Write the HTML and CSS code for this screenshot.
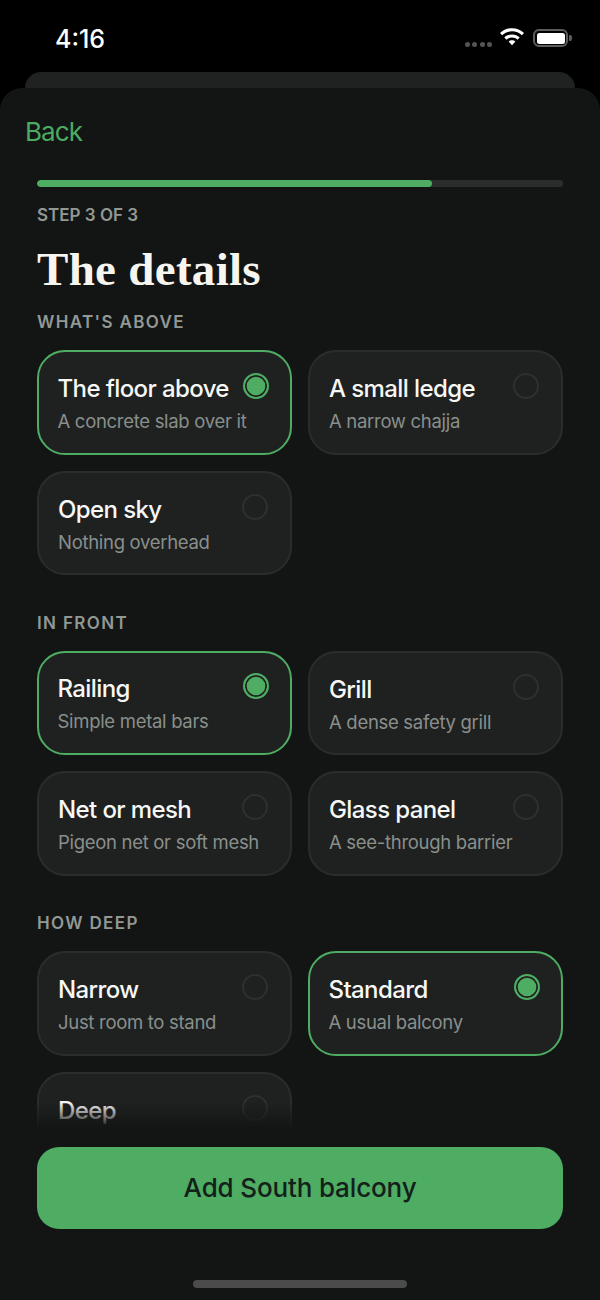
FILE: index.html
```html
<!DOCTYPE html>
<html lang="en">
<head>
<meta charset="utf-8">
<title>The details</title>
<link rel="stylesheet" href="styles.css">
</head>
<body>
<div class="phone">
  <div class="status">
    <span class="time">4:16</span>
    <div class="status-icons">
      <div class="signal"><i></i><i></i><i></i><i></i></div>
      <svg class="wifi" width="26" height="20" viewBox="0 0 26 20"><path d="M13 2.2c4.700 0 8.900 1.800 12 4.800l-2.100 2.300C20.300 6.800 16.800 5.300 13 5.300S5.700 6.800 3.100 9.300L1 7c3.100-3 7.300-4.800 12-4.800z" fill="#fff"/><path d="M13 8.400c3 0 5.700 1.100 7.700 3l-2.200 2.300c-1.400-1.300-3.400-2.200-5.500-2.200s-4.100.9-5.500 2.200l-2.200-2.300c2-1.900 4.700-3 7.700-3z" fill="#fff"/><path d="M13 14.300c1.300 0 2.500.5 3.400 1.300L13 19.200l-3.400-3.600c.9-.8 2.100-1.300 3.400-1.300z" fill="#fff"/></svg>
      <div class="battery"><div class="battery-body"><div class="battery-fill"></div></div><div class="battery-cap"></div></div>
    </div>
  </div>
  <div class="peek"></div>
  <div class="sheet">
    <button class="back">Back</button>
    <div class="scroll">
      <div class="progress"><div class="progress-fill"></div></div>
      <div class="step">STEP 3 OF 3</div>
      <h1 class="title">The details</h1>

      <section class="group">
        <h2 class="label">WHAT'S ABOVE</h2>
        <div class="grid">
          <div class="card on"><div class="card-head"><span class="name">The floor above</span><span class="radio"></span></div><p class="sub">A concrete slab over it</p></div>
          <div class="card"><div class="card-head"><span class="name">A small ledge</span><span class="radio"></span></div><p class="sub">A narrow chajja</p></div>
          <div class="card"><div class="card-head"><span class="name">Open sky</span><span class="radio"></span></div><p class="sub">Nothing overhead</p></div>
        </div>
      </section>

      <section class="group">
        <h2 class="label">IN FRONT</h2>
        <div class="grid">
          <div class="card on"><div class="card-head"><span class="name">Railing</span><span class="radio"></span></div><p class="sub">Simple metal bars</p></div>
          <div class="card"><div class="card-head"><span class="name">Grill</span><span class="radio"></span></div><p class="sub">A dense safety grill</p></div>
          <div class="card"><div class="card-head"><span class="name">Net or mesh</span><span class="radio"></span></div><p class="sub">Pigeon net or soft mesh</p></div>
          <div class="card"><div class="card-head"><span class="name">Glass panel</span><span class="radio"></span></div><p class="sub">A see-through barrier</p></div>
        </div>
      </section>

      <section class="group">
        <h2 class="label">HOW DEEP</h2>
        <div class="grid">
          <div class="card"><div class="card-head"><span class="name">Narrow</span><span class="radio"></span></div><p class="sub">Just room to stand</p></div>
          <div class="card on"><div class="card-head"><span class="name">Standard</span><span class="radio"></span></div><p class="sub">A usual balcony</p></div>
          <div class="card"><div class="card-head"><span class="name">Deep</span><span class="radio"></span></div></div>
        </div>
      </section>
      <div class="fade"></div>
    </div>
    <div class="footer">
      <button class="cta">Add South balcony</button>
    </div>
    <div class="home"></div>
  </div>
</div>
</body>
</html>
```
FILE: styles.css
```css
* { box-sizing: border-box; }
html, body { margin: 0; padding: 0; background: #000; }
body { font-family: Inter, "Noto Sans", sans-serif; }
.phone { width: 600px; height: 1300px; display: flex; flex-direction: column; overflow: hidden; background: #000; }

.status { height: 72px; flex: none; display: flex; justify-content: space-between; align-items: flex-start; padding: 24px 28px 0 55px; }
.time { margin-top: 1px; color: #fff; font: 500 25px/28px Inter, sans-serif; }
.status-icons { display: flex; align-items: flex-start; gap: 8px; }
.signal { display: flex; gap: 2.3px; margin: 18px -1px 0 0; }
.signal i { width: 5px; height: 5px; border-radius: 50%; background: #555; display: block; }
.wifi { display: block; margin-top: 2px; }
.battery { display: flex; align-items: center; gap: 1px; margin-top: 5px; }
.battery-body { width: 35px; height: 18px; border: 2px solid #5c5c5c; border-radius: 6px; padding: 1.5px; }
.battery-fill { width: 100%; height: 100%; background: #fff; border-radius: 2.5px; }
.battery-cap { width: 3px; height: 6px; background: #5c5c5c; border-radius: 0 2px 2px 0; }

.peek { height: 16px; flex: none; margin: 0 25px; background: #1f2221; border-radius: 20px 20px 0 0; }
.sheet { flex: 1; min-height: 0; display: flex; flex-direction: column; background: #121514; border-radius: 22px 22px 0 0; }

.back { flex: none; align-self: flex-start; margin: 27px 0 0 25px; padding: 0; background: none; border: 0; color: #4cab62; font: 400 26px/34px Inter, sans-serif; letter-spacing: -0.9px; }

.scroll { position: relative; height: 981px; flex: none; overflow: hidden; padding: 31px 37px 0; }
.progress { height: 7px; background: #2a2d2c; border-radius: 4px; overflow: hidden; }
.progress-fill { width: 75%; height: 100%; background: #4eac63; border-radius: 4px; }
.step { margin-top: 17px; color: #939895; font: 600 17px/22px Inter, sans-serif; letter-spacing: 0; }
.title { margin: 16px 0 0; color: #f7f5f0; font: 700 47px/54px "Liberation Serif", serif; letter-spacing: 0.3px; }
.group { margin-bottom: 36.400px; }
.label { margin: 15px 0 17px; color: #939895; font: 600 17px/22px Inter, sans-serif; letter-spacing: 1.350px; }
.group + .group .label { margin-top: 0; }
.grid { display: grid; grid-template-columns: 255px 255px; gap: 16px; }
.card { height: 104.600px; padding: 19px 22px 0 19px; background: #1e2120; border: 2px solid #2a2d2c; border-radius: 28px; }
.card.on { border-width: 2.500px; border-color: #4eac63; padding: 18.500px 21.500px 0 18.500px; }
.card-head { display: flex; justify-content: space-between; align-items: flex-start; }
.name { color: #f7f7f5; font: 500 24px/36px Inter, sans-serif; letter-spacing: -0.600px; white-space: nowrap; }
.sub { margin: -1px 0 0; color: #8a8f8c; font: 400 18.500px/30px Inter, sans-serif; letter-spacing: -0.300px; white-space: nowrap; }
.radio { width: 26px; height: 26px; flex: none; margin: 2px 0 0; border: 2px solid #2d302f; border-radius: 50%; }
.card.on .radio { background: #4eac63; border: 2px solid #4eac63; box-shadow: inset 0 0 0 1.700px #1e2120; }
.fade { position: absolute; left: 0; right: 0; bottom: 0; height: 28px; background: linear-gradient(to bottom, rgba(18,21,20,0), #121514 95%); }

.footer { flex: none; padding: 17px 37px 0; }
.cta { display: block; width: 100%; height: 82px; background: #4eac63; border: 0; border-radius: 22px; color: #14201a; font: 500 26px/32px Inter, sans-serif; letter-spacing: -0.150px; }
.home { flex: none; width: 214px; height: 8px; margin: 51px auto 0; border-radius: 4px; background: #4b4b4b; }
```
